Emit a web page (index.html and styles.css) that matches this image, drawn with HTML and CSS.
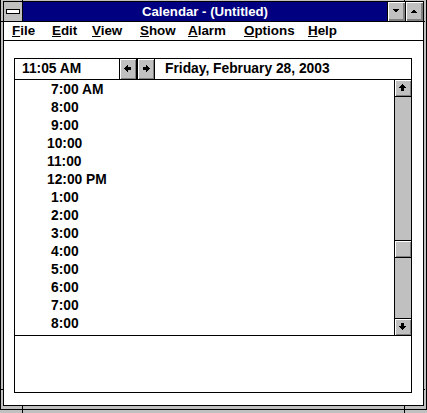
FILE: index.html
```html
<!DOCTYPE html>
<html>
<head>
<meta charset="utf-8">
<link rel="stylesheet" href="styles.css">
</head>
<body>
<div class="window">
  <div class="frame">
    <div class="titlebar">
      <div class="sysmenu">
        <svg width="18" height="19" viewBox="0 0 18 19" shape-rendering="crispEdges">
          <rect x="3" y="8" width="13" height="4" fill="#808080"/>
          <rect x="2" y="7" width="13" height="4" fill="#fff" stroke="#000" stroke-width="1"/>
        </svg>
      </div>
      <div class="title">Calendar - (Untitled)</div>
      <div class="capbtn">
        <svg width="17" height="19" viewBox="0 0 17 19" shape-rendering="crispEdges">
          <polygon points="4.5,7 11.5,7 8,11" fill="#000"/>
        </svg>
      </div>
      <div class="capbtn">
        <svg width="17" height="19" viewBox="0 0 17 19" shape-rendering="crispEdges">
          <polygon points="4.5,11 11.5,11 8,7" fill="#000"/>
        </svg>
      </div>
    </div>
    <div class="menubar">
      <span class="mi w-file"><u>F</u>ile</span>
      <span class="mi w-edit"><u>E</u>dit</span>
      <span class="mi w-view"><u>V</u>iew</span>
      <span class="mi w-show"><u>S</u>how</span>
      <span class="mi w-alarm"><u>A</u>larm</span>
      <span class="mi w-options"><u>O</u>ptions</span>
      <span class="mi"><u>H</u>elp</span>
    </div>
    <div class="client">
      <div class="panel">
        <div class="header">
          <span class="clock">11:05 AM</span>
          <div class="navbtn">
            <svg width="16" height="20" viewBox="0 0 16 20" shape-rendering="crispEdges">
              <rect x="4" y="9" width="1" height="1" fill="#000"/>
              <rect x="5" y="8" width="1" height="3" fill="#000"/>
              <rect x="6" y="7" width="1" height="5" fill="#000"/>
              <rect x="7" y="6" width="1" height="7" fill="#000"/>
              <rect x="8" y="8" width="3" height="3" fill="#000"/>
            </svg>
          </div>
          <div class="navbtn">
            <svg width="16" height="20" viewBox="0 0 16 20" shape-rendering="crispEdges">
              <rect x="5" y="8" width="3" height="3" fill="#000"/>
              <rect x="8" y="6" width="1" height="7" fill="#000"/>
              <rect x="9" y="7" width="1" height="5" fill="#000"/>
              <rect x="10" y="8" width="1" height="3" fill="#000"/>
              <rect x="11" y="9" width="1" height="1" fill="#000"/>
            </svg>
          </div>
          <span class="date">Friday, February 28, 2003</span>
        </div>
        <div class="listarea">
          <div class="times">
            <div class="row s">7:00 AM</div>
            <div class="row s">8:00</div>
            <div class="row s">9:00</div>
            <div class="row">10:00</div>
            <div class="row">11:00</div>
            <div class="row">12:00 PM</div>
            <div class="row s">1:00</div>
            <div class="row s">2:00</div>
            <div class="row s">3:00</div>
            <div class="row s">4:00</div>
            <div class="row s">5:00</div>
            <div class="row s">6:00</div>
            <div class="row s">7:00</div>
            <div class="row s">8:00</div>
          </div>
          <div class="vscroll">
            <div class="sbtn up">
              <svg width="16" height="16" viewBox="0 0 16 16" shape-rendering="crispEdges">
                <rect x="7" y="4" width="1" height="1" fill="#000"/>
                <rect x="6" y="5" width="3" height="1" fill="#000"/>
                <rect x="5" y="6" width="5" height="1" fill="#000"/>
                <rect x="4" y="7" width="7" height="1" fill="#000"/>
                <rect x="6" y="8" width="3" height="3" fill="#000"/>
              </svg>
            </div>
            <div class="trough"><div class="thumb"></div></div>
            <div class="sbtn down">
              <svg width="16" height="16" viewBox="0 0 16 16" shape-rendering="crispEdges">
                <rect x="6" y="4" width="3" height="3" fill="#000"/>
                <rect x="4" y="7" width="7" height="1" fill="#000"/>
                <rect x="5" y="8" width="5" height="1" fill="#000"/>
                <rect x="6" y="9" width="3" height="1" fill="#000"/>
                <rect x="7" y="10" width="1" height="1" fill="#000"/>
              </svg>
            </div>
          </div>
        </div>
        <div class="notes"></div>
      </div>
    </div>
  </div>
  <div class="tick tick-top1"></div>
  <div class="tick tick-top2"></div>
  <div class="tick tick-bot1"></div>
  <div class="tick tick-bot2"></div>
  <div class="tick tick-left1"></div>
  <div class="tick tick-left2"></div>
  <div class="tick tick-right1"></div>
  <div class="tick tick-right2"></div>
</div>
</body>
</html>
```
FILE: styles.css
```css
* { box-sizing: border-box; }
html, body {
  margin: 0;
  padding: 0;
  background: #c0c0c0;
}
body {
  font-family: "Liberation Sans", Arial, sans-serif;
  font-weight: bold;
  font-size: 13px;
  color: #000;
  width: 427px;
  height: 413px;
  overflow: hidden;
}
.window {
  position: relative;
  width: 427px;
  height: 410px;
  background: #c0c0c0;
  border-left: 1px solid #000;
  border-right: 1px solid #000;
  border-bottom: 1px solid #000;
  padding: 1px 2px 3px 2px;
}
.frame {
  border: 1px solid #000;
  height: 405px;
  display: flex;
  flex-direction: column;
}
.titlebar {
  height: 20px;
  border-bottom: 1px solid #000;
  display: flex;
  flex: none;
}
.sysmenu {
  width: 19px;
  height: 19px;
  background: #c0c0c0;
  border-right: 1px solid #000;
}
.sysmenu svg { display: block; }
.title {
  flex: 1;
  background: #000080;
  color: #fff;
  text-align: center;
  line-height: 19px;
  height: 19px;
  font-size: 13.2px;
  white-space: nowrap;
}
.capbtn {
  width: 18px;
  height: 19px;
  border-left: 1px solid #000;
  background: #c0c0c0;
  box-shadow: inset 1px 1px 0 #fff, inset -2px -2px 0 #808080;
}
.capbtn svg { display: block; }
.menubar {
  height: 19px;
  border-bottom: 1px solid #000;
  background: #fff;
  display: flex;
  padding-left: 8px;
  line-height: 18px;
  font-size: 13.4px;
  flex: none;
  white-space: nowrap;
}
.mi u {
  text-decoration: underline;
  text-decoration-thickness: 1px;
  text-underline-offset: 1px;
}
.w-file { width: 40px; }
.w-edit { width: 40px; }
.w-view { width: 48px; }
.w-show { width: 48px; }
.w-alarm { width: 56px; }
.w-options { width: 64px; }
.client {
  flex: 1;
  background: #fff;
  padding: 17px 11px 12px 10px;
}
.panel {
  width: 398px;
  height: 335px;
  border: 1px solid #000;
  display: flex;
  flex-direction: column;
  font-size: 13.8px;
}
.header {
  height: 21px;
  border-bottom: 1px solid #000;
  display: flex;
  align-items: stretch;
  line-height: 20px;
  flex: none;
  white-space: nowrap;
}
.clock {
  width: 104px;
  padding-left: 7px;
}
.navbtn {
  width: 18px;
  height: 20px;
  border-left: 1px solid #000;
  border-right: 1px solid #000;
  background: #c0c0c0;
  box-shadow: inset 1px 1px 0 #fff, inset -1px -1px 0 #808080;
}
.navbtn svg { display: block; }
.date {
  margin-left: 10px;
}
.listarea {
  height: 255px;
  display: flex;
  flex: none;
}
.times {
  flex: 1;
  padding-left: 32px;
  padding-top: 1px;
}
.row {
  height: 18px;
  line-height: 18px;
  white-space: nowrap;
}
.row.s { padding-left: 4px; }
.vscroll {
  width: 17px;
  border-left: 1px solid #000;
  display: flex;
  flex-direction: column;
  background: #c0c0c0;
}
.sbtn {
  height: 17px;
  background: #c0c0c0;
  box-shadow: inset 1px 1px 0 #fff, inset -1px -1px 0 #808080;
}
.sbtn.up { border-bottom: 1px solid #000; }
.sbtn.down { border-top: 1px solid #000; }
.sbtn svg { display: block; }
.trough {
  flex: 1;
  background: #c0c0c0;
}
.thumb {
  margin-top: 143px;
  height: 18px;
  border-top: 1px solid #000;
  border-bottom: 1px solid #000;
  background: #c0c0c0;
  box-shadow: inset 1px 1px 0 #fff, inset -1px -1px 0 #808080;
}
.notes {
  flex: 1;
  border-top: 1px solid #000;
}
.tick {
  position: absolute;
  background: #000;
}
.tick-top1 { left: 21px; top: 0; width: 1px; height: 1px; }
.tick-top2 { left: 403px; top: 0; width: 1px; height: 1px; }
.tick-bot1 { left: 21px; top: 405px; width: 1px; height: 8px; }
.tick-bot2 { left: 403px; top: 405px; width: 1px; height: 8px; }
.tick-left1 { left: 0; top: 21px; width: 2px; height: 1px; }
.tick-left2 { left: 0; top: 389px; width: 2px; height: 1px; }
.tick-right1 { left: 422px; top: 21px; width: 2px; height: 1px; }
.tick-right2 { left: 422px; top: 389px; width: 2px; height: 1px; }
```
